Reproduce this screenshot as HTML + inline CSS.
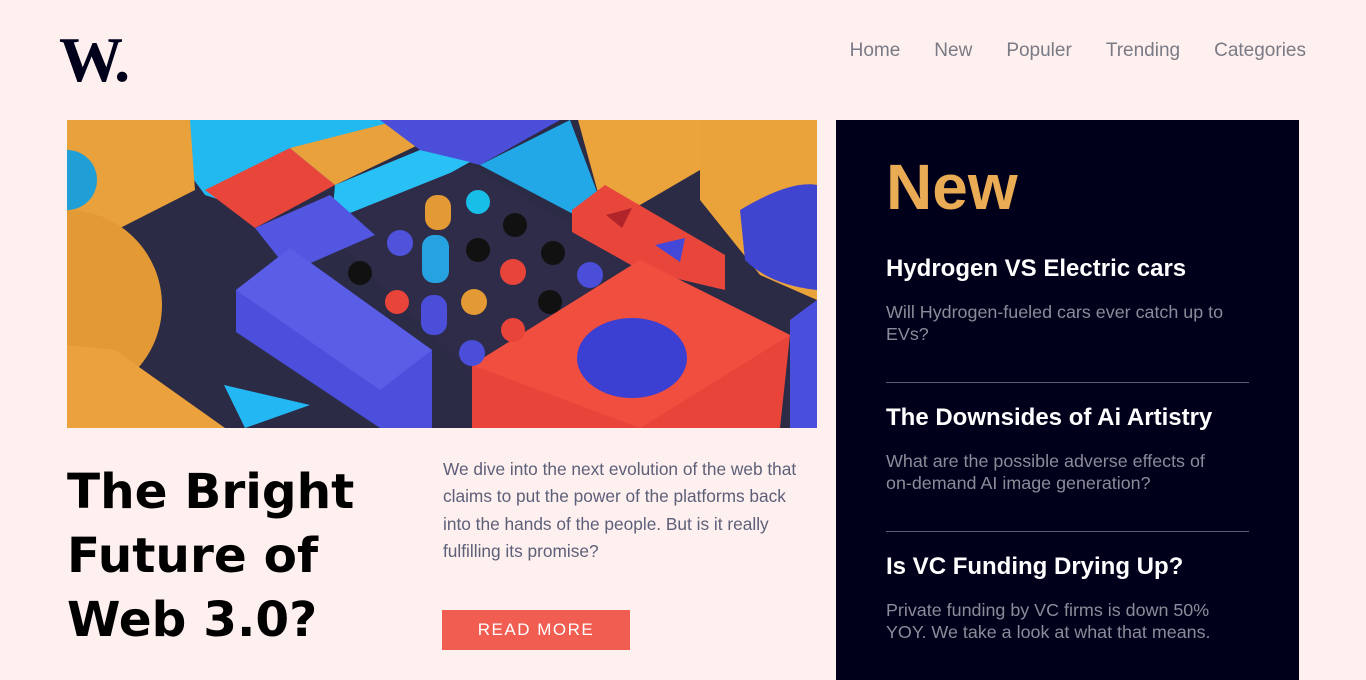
<!DOCTYPE html>
<html><head><meta charset="utf-8"><style>
*{margin:0;padding:0;box-sizing:border-box}
body{width:1366px;height:663px;overflow:hidden;background:#fdf0ef;font-family:"Liberation Sans",sans-serif;position:relative}
.logo{position:absolute;left:59px;top:25px;font-family:"Liberation Serif",serif;font-weight:bold;font-size:64px;color:#00001a;letter-spacing:-3px;line-height:70px}
nav{position:absolute;top:40px;right:60px;display:flex;gap:34px;font-size:19px;color:#7a7a85}
svg.hero{position:absolute;left:67px;top:120px}
h1{position:absolute;left:67px;top:460px;font-family:"DejaVu Sans",sans-serif;font-size:48.5px;line-height:64px;font-weight:bold;color:#000;width:360px}
p.lead{position:absolute;left:443px;top:456px;width:372px;font-size:17.3px;line-height:27.3px;color:#5d5f79}
.btn{position:absolute;left:442px;top:610px;width:188px;height:40px;background:#f15d51;color:#fff;font-size:17px;letter-spacing:1.5px;text-align:center;line-height:40px}
.panel{position:absolute;left:836px;top:120px;width:463px;height:560px;background:#00001a;padding:0 50px}
.panel h2{color:#e9ab53;font-size:64px;font-weight:bold;margin-top:32px;line-height:70px}
.item h3{color:#fff;font-size:24px;font-weight:bold;line-height:30px}
.item p{color:#8b8c99;font-size:17.9px;line-height:22px;margin-top:17px;width:345px}
.div{height:1px;background:#5d5f79;margin:37px 0 20px}
</style></head><body>
<div class="logo">W.</div>
<nav><span>Home</span><span>New</span><span>Populer</span><span>Trending</span><span>Categories</span></nav>
<svg class="hero" width="750" height="308" viewBox="67 120 750 308">
<rect x="67" y="120" width="750" height="308" fill="#2b2b45"/>
<polygon points="150,120 420,120 340,175 265,215 205,195" fill="#22b8f0"/>
<polygon points="67,120 190,120 195,190 67,255" fill="#e9a13b"/>
<circle cx="67" cy="180" r="30" fill="#1f9fd6"/>
<circle cx="67" cy="305" r="95" fill="#e39a35"/>
<polygon points="67,345 115,350 225,428 67,428" fill="#eba23d"/>
<polygon points="205,190 290,148 335,185 255,228" fill="#e8463b"/>
<polygon points="290,148 400,120 470,120 335,185" fill="#e9a13b"/>
<polygon points="380,120 560,120 480,165 420,150" fill="#4a4ed8"/>
<polygon points="335,185 420,150 470,162 330,240" fill="#29c0f5"/>
<polygon points="320,225 470,165 630,260 480,380" fill="#2e2c48"/>
<polygon points="480,165 570,120 600,200 575,215" fill="#22a8e6"/>
<polygon points="578,120 700,120 700,170 640,205 600,200" fill="#eba33c"/>
<polygon points="255,228 330,195 375,235 290,272" fill="#5256e0"/>
<polygon points="236,290 290,248 432,350 432,428 380,428 236,332" fill="#4b4fdc"/>
<polygon points="236,290 290,248 432,350 380,390" fill="#5a5ee6"/>
<polygon points="572,210 605,185 725,255 725,290 640,270 572,232" fill="#e8463b"/>
<polygon points="700,120 817,120 817,300 760,275 700,200" fill="#eaa23b"/>
<path d="M740 210 Q790 180 817 185 L817 290 Q770 285 745 260Z" fill="#4045cf"/>
<polygon points="472,365 640,260 790,335 780,428 472,428" fill="#e8443a"/>
<polygon points="472,365 640,260 790,335 640,428" fill="#f04f40"/>
<ellipse cx="632" cy="358" rx="55" ry="40" fill="#3b40d2"/>
<polygon points="790,320 817,300 817,428 790,428" fill="#4a4edc"/>
<polygon points="224,385 310,405 245,428" fill="#23b7f3"/>
<polygon points="606,215 632,208 622,228" fill="#b0242a"/>
<polygon points="655,245 685,238 680,262" fill="#4448d8"/>
<rect x="425" y="195" width="26" height="35" rx="12" fill="#e39a35"/>
<rect x="422" y="235" width="27" height="48" rx="12" fill="#27a2e0"/>
<rect x="421" y="295" width="26" height="40" rx="12" fill="#4a4ed8"/>
<circle cx="400" cy="243" r="13" fill="#4f53dc"/><circle cx="478" cy="202" r="12" fill="#18bde8"/>
<circle cx="515" cy="225" r="12" fill="#111"/><circle cx="478" cy="250" r="12" fill="#111"/>
<circle cx="553" cy="253" r="12" fill="#111"/><circle cx="360" cy="273" r="12" fill="#111"/>
<circle cx="513" cy="272" r="13" fill="#e8443a"/><circle cx="590" cy="275" r="13" fill="#4a4ed8"/>
<circle cx="397" cy="302" r="12" fill="#e8443a"/><circle cx="474" cy="302" r="13" fill="#e39a35"/>
<circle cx="550" cy="302" r="12" fill="#111"/><circle cx="513" cy="330" r="12" fill="#e8443a"/>
<circle cx="472" cy="353" r="13" fill="#4a4ed8"/>
</svg>
<h1>The Bright Future of Web 3.0?</h1>
<p class="lead">We dive into the next evolution of the web that claims to put the power of the platforms back into the hands of the people. But is it really fulfilling its promise?</p>
<div class="btn">READ MORE</div>
<div class="panel">
<h2>New</h2>
<div class="item" style="margin-top:32px"><h3>Hydrogen VS Electric cars</h3><p>Will Hydrogen-fueled cars ever catch up to EVs?</p></div>
<div class="div"></div>
<div class="item"><h3>The Downsides of Ai Artistry</h3><p style="width:330px">What are the possible adverse effects of on-demand AI image generation?</p></div>
<div class="div"></div>
<div class="item"><h3>Is VC Funding Drying Up?</h3><p>Private funding by VC firms is down 50% YOY. We take a look at what that means.</p></div>
</div>
</body></html>
